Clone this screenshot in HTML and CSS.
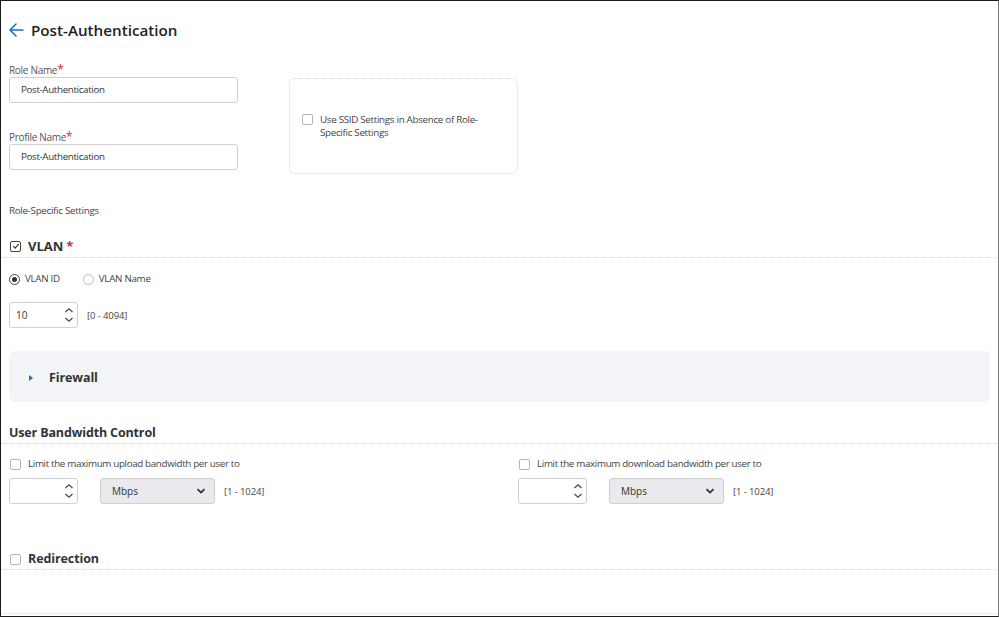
FILE: index.html
```html
<!DOCTYPE html>
<html lang="en">

<head>
    <meta charset="UTF-8">
    <meta name="viewport" content="width=device-width, initial-scale=1.0">
    <title>Post-Authentication</title>
    <link rel="stylesheet" href="styles.css">
</head>

<body>
    <div class="frame">

        <div class="title-row">
            <svg class="back-icon" width="16" height="16" viewBox="0 0 16 16" aria-hidden="true">
                <path d="M15 8H2M8 2L2 8l6 6" fill="none" stroke="#1a6fc9" stroke-width="1.6" stroke-linecap="round" stroke-linejoin="round" />
            </svg>
            <h1>Post-Authentication</h1>
        </div>

        <div class="top-grid">
            <div class="names">
                <div class="field-label">Role Name<span class="req">*</span></div>
                <div class="text-input">Post-Authentication</div>
                <div class="field-label second">Profile Name<span class="req">*</span></div>
                <div class="text-input">Post-Authentication</div>
            </div>
            <div class="ssid-box">
                <span class="box"></span>
                <span class="ssid-text">Use SSID Settings in Absence of Role-Specific Settings</span>
            </div>
        </div>

        <p class="subhead">Role-Specific Settings</p>

        <!-- VLAN -->
        <div class="section-head vlan-head">
            <span class="box checked">
                <svg width="8" height="8" viewBox="0 0 8 8"><path d="M1.2 4.2l1.9 1.9L6.8 1.8" fill="none" stroke="#333" stroke-width="1.1" /></svg>
            </span>
            <h2>VLAN</h2><span class="req big">*</span>
        </div>

        <div class="radio-row">
            <label class="radio"><span class="dot on"></span>VLAN ID</label>
            <label class="radio"><span class="dot"></span>VLAN Name</label>
        </div>

        <div class="num-row">
            <div class="num-input">
                <span>10</span>
                <span class="spin">
                    <svg width="10" height="16" viewBox="0 0 10 16"><path d="M1.5 5L5 1.8 8.5 5M1.5 11L5 14.2 8.5 11" fill="none" stroke="#444" stroke-width="1.2" /></svg>
                </span>
            </div>
            <span class="range">[0 - 4094]</span>
        </div>

        <!-- Firewall -->
        <div class="panel">
            <span class="caret"></span>
            <span class="panel-title">Firewall</span>
        </div>

        <!-- Bandwidth -->
        <div class="section-head bw-head">
            <h2>User Bandwidth Control</h2>
        </div>

        <div class="bw-grid">
            <div class="bw-col">
                <label class="check-line"><span class="box"></span>Limit the maximum upload bandwidth per user to</label>
                <div class="bw-inputs">
                    <div class="num-input">
                        <span></span>
                        <span class="spin">
                            <svg width="10" height="16" viewBox="0 0 10 16"><path d="M1.5 5L5 1.8 8.5 5M1.5 11L5 14.2 8.5 11" fill="none" stroke="#444" stroke-width="1.2" /></svg>
                        </span>
                    </div>
                    <div class="select">
                        <span>Mbps</span>
                        <svg width="10" height="8" viewBox="0 0 10 8"><path d="M1.5 2.2L5 5.6 8.5 2.2" fill="none" stroke="#333" stroke-width="1.8" /></svg>
                    </div>
                    <span class="range">[1 - 1024]</span>
                </div>
            </div>
            <div class="bw-col">
                <label class="check-line"><span class="box"></span>Limit the maximum download bandwidth per user to</label>
                <div class="bw-inputs">
                    <div class="num-input">
                        <span></span>
                        <span class="spin">
                            <svg width="10" height="16" viewBox="0 0 10 16"><path d="M1.5 5L5 1.8 8.5 5M1.5 11L5 14.2 8.5 11" fill="none" stroke="#444" stroke-width="1.2" /></svg>
                        </span>
                    </div>
                    <div class="select">
                        <span>Mbps</span>
                        <svg width="10" height="8" viewBox="0 0 10 8"><path d="M1.5 2.2L5 5.6 8.5 2.2" fill="none" stroke="#333" stroke-width="1.8" /></svg>
                    </div>
                    <span class="range">[1 - 1024]</span>
                </div>
            </div>
        </div>

        <!-- Redirection -->
        <div class="section-head redir-head">
            <span class="box"></span>
            <h2>Redirection</h2>
        </div>

        <div class="footer-line"></div>
    </div>
</body>

</html>
```

FILE: styles.css
```css
body {
    margin: 0;
    font-family: "Open Sans", "Noto Sans", Arial, sans-serif;
    color: #333;
    background: #fff;
}

.frame {
    box-sizing: border-box;
    width: 999px;
    height: 617px;
    border: 1px solid #1c1c1c;
    border-right-color: #7a7a7a;
    overflow: hidden;
    padding-top: 19px;
}

/* titolo */
.title-row {
    display: flex;
    align-items: center;
    gap: 7px;
    padding-left: 7px;
    height: 20px;
}

.title-row h1 {
    margin: 0;
    font-size: 15.2px;
    line-height: 20px;
    font-weight: 600;
    color: #222;
}

/* nomi e ssid */
.top-grid {
    display: flex;
    align-items: flex-start;
    gap: 51px;
    padding-left: 8px;
    margin-top: 23px;
}

.names {
    width: 229px;
}

.field-label {
    font-size: 10px;
    line-height: 14px;
    letter-spacing: -0.3px;
    color: #555;
}

.field-label.second {
    margin-top: 27px;
}

.req {
    color: #e0262b;
    font-size: 12px;
}

.req.big {
    font-size: 13px;
    font-weight: 700;
    margin-left: 3px;
}

.text-input {
    box-sizing: border-box;
    height: 26px;
    border: 1px solid #cfcfcf;
    border-radius: 3px;
    padding-left: 11px;
    font-size: 9.8px;
    letter-spacing: -0.35px;
    line-height: 24px;
    color: #333;
}

.ssid-box {
    box-sizing: border-box;
    width: 229px;
    height: 96px;
    margin-top: 15px;
    border: 1px dotted #d4d4d4;
    border-radius: 6px;
    display: flex;
    align-items: center;
    gap: 7px;
    padding: 0 26px 0 12px;
}

.ssid-box .box {
    margin-top: -13px;
}

.ssid-text {
    font-size: 9.8px;
    line-height: 13px;
    letter-spacing: -0.3px;
    color: #444;
}

.box {
    box-sizing: border-box;
    flex: none;
    width: 11px;
    height: 11px;
    border: 1px solid #b5b5b5;
    border-radius: 2px;
    display: inline-flex;
    align-items: center;
    justify-content: center;
    background: #fff;
}

.box.checked {
    border-color: #444;
}

.subhead {
    margin: 30px 0 0;
    padding-left: 8px;
    font-size: 9.8px;
    line-height: 14px;
    letter-spacing: -0.3px;
    color: #444;
}

/* intestazioni sezioni */
.section-head {
    display: flex;
    align-items: center;
    gap: 7px;
    padding: 0 0 2px 9px;
    border-bottom: 1px dotted #d8d8d8;
}

.section-head h2 {
    margin: 0;
    font-size: 13px;
    line-height: 18px;
    font-weight: 700;
    color: #333;
}

.vlan-head {
    margin-top: 19px;
}

.vlan-head .req {
    margin-left: -4px;
}

.radio-row {
    display: flex;
    gap: 23px;
    padding-left: 8px;
    margin-top: 14px;
}

.radio {
    display: flex;
    align-items: center;
    gap: 5px;
    font-size: 9.8px;
    line-height: 14px;
    letter-spacing: -0.3px;
    color: #444;
}

.dot {
    box-sizing: border-box;
    width: 11px;
    height: 11px;
    border: 1px solid #bdbdbd;
    border-radius: 50%;
    display: inline-flex;
    align-items: center;
    justify-content: center;
}

.dot.on {
    border-color: #444;
}

.dot.on::after {
    content: "";
    width: 5px;
    height: 5px;
    border-radius: 50%;
    background: #333;
}

.num-row {
    display: flex;
    align-items: center;
    gap: 9px;
    padding-left: 8px;
    margin-top: 16px;
}

.num-input {
    box-sizing: border-box;
    width: 69px;
    height: 26px;
    border: 1px solid #cfcfcf;
    border-radius: 3px;
    display: flex;
    align-items: center;
    justify-content: space-between;
    padding: 0 3px 0 6px;
    font-size: 10px;
    color: #333;
}

.spin {
    display: flex;
}

.range {
    font-size: 9.5px;
    letter-spacing: -0.1px;
    color: #444;
}

/* firewall */
.panel {
    box-sizing: border-box;
    height: 51px;
    margin: 23px 8px 0;
    background: #f3f4f8;
    border-radius: 6px;
    display: flex;
    align-items: center;
    padding: 2px 0 0 20px;
}

.caret {
    width: 0;
    height: 0;
    border-left: 4px solid #1a6fc9;
    border-top: 3.5px solid transparent;
    border-bottom: 3.5px solid transparent;
    margin-right: 16px;
}

.panel-title {
    font-size: 12.5px;
    font-weight: 700;
    letter-spacing: -0.1px;
    color: #333;
}

/* banda */
.bw-head {
    margin-top: 23px;
    padding-left: 8px;
}

.bw-head h2 {
    font-size: 12.5px;
    line-height: 16px;
    letter-spacing: -0.15px;
}

.bw-grid {
    display: grid;
    grid-template-columns: 509px 1fr;
    padding-left: 8px;
    margin-top: 13px;
}

.check-line {
    display: flex;
    align-items: center;
    gap: 7px;
    padding-left: 1px;
    font-size: 9.8px;
    line-height: 14px;
    letter-spacing: -0.35px;
    color: #444;
}

.bw-inputs {
    display: flex;
    align-items: center;
    margin-top: 7px;
}

.bw-inputs .select {
    margin-left: 22px;
}

.select {
    box-sizing: border-box;
    width: 115px;
    height: 26px;
    background: #e9e9ee;
    border: 1px solid #cfcfcf;
    border-radius: 3px;
    display: flex;
    align-items: center;
    justify-content: space-between;
    padding: 0 8px 0 11px;
    font-size: 10px;
    color: #333;
}

.bw-inputs .range {
    margin-left: 9px;
}

.redir-head {
    margin-top: 47px;
}

.redir-head h2 {
    font-size: 12.5px;
    line-height: 16px;
    letter-spacing: -0.1px;
}

.footer-line {
    margin-top: 43px;
    border-top: 1px solid #eeeeee;
}
```
